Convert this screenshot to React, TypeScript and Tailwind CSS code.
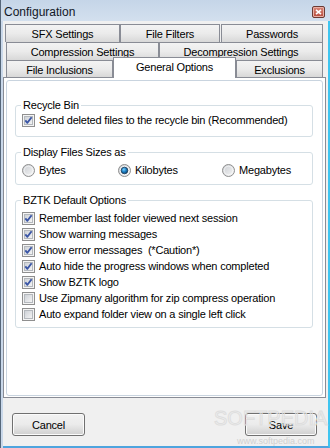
import React from "react";

type TabProps = {
  label: string;
  width: string;
  selected?: boolean;
};

function Tab({ label, width, selected }: TabProps) {
  if (selected) {
    return (
      <div
        className={`relative z-10 -mt-[3px] flex h-[21px] ${width} shrink-0 items-start justify-center border border-b-0 border-[#898c95] bg-white pt-[2px] leading-[14px]`}
      >
        {label}
      </div>
    );
  }
  return (
    <div
      className={`flex h-full ${width} shrink-0 items-center justify-center border border-b-0 border-[#898c95] bg-gradient-to-b from-[#f3f3f3] via-[#ebebeb] via-50% to-[#d8d8d8] pt-[1px] leading-[14px]`}
    >
      {label}
    </div>
  );
}

function CheckBox({ checked }: { checked: boolean }) {
  return (
    <svg width="13" height="13" viewBox="0 0 13 13" className="shrink-0">
      <defs>
        <linearGradient id="cbfill" x1="0" y1="0" x2="1" y2="1">
          <stop offset="0" stopColor="#cbcfd5" />
          <stop offset="1" stopColor="#f6f6f6" />
        </linearGradient>
      </defs>
      <rect x="0.5" y="0.5" width="12" height="12" fill="#f4f4f4" stroke="#8f8f8f" />
      <rect x="2.5" y="2.5" width="8" height="8" fill="url(#cbfill)" stroke="#b4b8bd" />
      {checked && (
        <path
          d="M3.3 6.4 L5.4 8.8 L9.6 3.2"
          fill="none"
          stroke="#3b56a6"
          strokeWidth="1.9"
          strokeLinejoin="round"
        />
      )}
    </svg>
  );
}

function Radio({ checked }: { checked: boolean }) {
  return (
    <svg width="13" height="13" viewBox="0 0 13 13" className="shrink-0">
      <defs>
        <linearGradient id="rdfill" x1="0" y1="0" x2="1" y2="1">
          <stop offset="0" stopColor="#c9ccd1" />
          <stop offset="1" stopColor="#f7f7f7" />
        </linearGradient>
        <radialGradient id="rddot" cx="0.4" cy="0.35" r="0.7">
          <stop offset="0" stopColor="#7fd3ff" />
          <stop offset="0.5" stopColor="#1b7fc4" />
          <stop offset="1" stopColor="#0c3f6b" />
        </radialGradient>
      </defs>
      <circle cx="6.5" cy="6.5" r="6" fill="url(#rdfill)" stroke="#8f8f8f" />
      <circle cx="6.5" cy="6.5" r="4.3" fill="none" stroke="#ffffff" strokeOpacity="0.6" />
      {checked && <circle cx="6.5" cy="6.5" r="3.3" fill="url(#rddot)" stroke="#1c3a57" strokeWidth="0.8" />}
    </svg>
  );
}

function CheckRow({ label, checked }: { label: string; checked: boolean }) {
  return (
    <div className="flex h-[16px] items-center gap-[4px]">
      <CheckBox checked={checked} />
      <span className="whitespace-pre leading-[14px]">{label}</span>
    </div>
  );
}

function Group({
  title,
  className,
  children,
}: {
  title: string;
  className: string;
  children: React.ReactNode;
}) {
  return (
    <div className={`relative rounded-[3px] border border-[#d5dfe5] pl-[6px] ${className}`}>
      <span className="absolute -top-[8px] left-[5px] bg-white px-[2px] leading-[14px]">
        {title}
      </span>
      {children}
    </div>
  );
}

function WinButton({ label }: { label: string }) {
  return (
    <button className="flex h-[23px] w-full items-center justify-center rounded-[3px] border border-[#707070] bg-gradient-to-b from-[#f2f2f2] via-[#ebebeb] via-50% to-[#cfcfcf] shadow-[inset_0_0_0_1px_#fbfbfb] leading-[14px] text-black">
      {label}
    </button>
  );
}

export default function App() {
  const options = [
    { label: "Remember last folder viewed next session", checked: true },
    { label: "Show warning messages", checked: true },
    { label: "Show error messages  (*Caution*)", checked: true },
    { label: "Auto hide the progress windows when completed", checked: true },
    { label: "Show BZTK logo", checked: true },
    { label: "Use Zipmany algorithm for zip compress operation", checked: false },
    { label: "Auto expand folder view on a single left click", checked: false },
  ];

  return (
    <div className="relative flex h-[448px] w-[330px] flex-col overflow-hidden border-l border-[#56677a] bg-[#c9d8ea] font-['Liberation_Sans',Arial,sans-serif] text-[11px] tracking-[-0.2px] text-black">
      {/* title bar */}
      <div className="flex h-[21px] shrink-0 items-center justify-between bg-gradient-to-b from-[#c5d5e8] to-[#d3e0ee] pl-[3px] pr-[5px]">
        <span className="pt-[2px] text-[12px] tracking-normal text-[#111827]">Configuration</span>
        <div className="mt-[2px] flex h-[12px] w-[13px] items-center justify-center rounded-[2px] border border-[#6b3a33] bg-gradient-to-b from-[#d9877a] to-[#b6493a] shadow-[inset_0_0_0_1px_#e9b0a6]">
          <svg width="7" height="6" viewBox="0 0 7 6">
            <path d="M1 0.8 L6 5.2 M6 0.8 L1 5.2" stroke="#ffffff" strokeWidth="1.6" />
          </svg>
        </div>
      </div>

      {/* dialog body */}
      <div className="ml-[2px] flex flex-1 flex-col border-b-2 border-r-2 border-b-[#4ea4de] border-r-[#3fc5f0] bg-[#f0f0f0]">
        {/* tab rows */}
        <div className="flex flex-col pt-[3px]">
          <div className="ml-[2px] flex h-[18px]">
            <Tab label="SFX Settings" width="w-[115px]" />
            <Tab label="File Filters" width="w-[100px]" />
            <div className="w-[1px]" />
            <Tab label="Passwords" width="w-[102px]" />
          </div>
          <div className="ml-[3px] flex h-[18px]">
            <Tab label="Compression Settings" width="w-[153px]" />
            <Tab label="Decompression Settings" width="w-[164px]" />
          </div>
          <div className="ml-[3px] flex h-[17px] items-start">
            <Tab label="File Inclusions" width="w-[107px]" />
            <Tab label="General Options" width="w-[123px]" selected />
            <Tab label="Exclusions" width="w-[87px]" />
          </div>
        </div>

        {/* tab panel */}
        <div className="flex h-[321px] w-[323px] flex-col border border-[#898c95] bg-white pb-[1px] pl-[2px] pr-[2px] pt-[2px]">
          <div className="flex flex-1 flex-col rounded-[3px] border border-[#c9d4df] pl-[8px] pr-[9px] pt-[24px]">
            <Group title="Recycle Bin" className="pb-[8px] pt-[6px]">
              <CheckRow label="Send deleted files to the recycle bin (Recommended)" checked />
            </Group>

            <Group title="Display Files Sizes as" className="mt-[15px] pb-[6px] pt-[9px]">
              <div className="grid h-[16px] grid-cols-[96px_104px_1fr] items-center">
                <div className="flex items-center gap-[4px]">
                  <Radio checked={false} />
                  <span className="leading-[14px]">Bytes</span>
                </div>
                <div className="flex items-center gap-[4px]">
                  <Radio checked />
                  <span className="leading-[14px]">Kilobytes</span>
                </div>
                <div className="flex items-center gap-[4px]">
                  <Radio checked={false} />
                  <span className="leading-[14px]">Megabytes</span>
                </div>
              </div>
            </Group>

            <Group title="BZTK Default Options" className="mt-[15px] pb-[5px] pt-[9px]">
              {options.map((o) => (
                <CheckRow key={o.label} label={o.label} checked={o.checked} />
              ))}
            </Group>
          </div>
        </div>

        {/* buttons */}
        <div className="flex justify-between pl-[9px] pr-[11px] pt-[15px]">
          <div className="w-[73px]">
            <WinButton label="Cancel" />
          </div>
          <div className="w-[72px]">
            <WinButton label="Save" />
          </div>
        </div>
      </div>

      {/* watermark */}
      <div className="pointer-events-none absolute left-[213px] top-[407px] font-['Liberation_Sans',sans-serif] text-[20px] leading-[22px] tracking-normal text-transparent [-webkit-text-stroke:1px_#dedede]">
        SOFTPEDIA
      </div>
      <div className="pointer-events-none absolute left-[236px] top-[436px] text-[9px] leading-[10px] tracking-normal text-[#d0d0d0]">
        www.softpedia.com
      </div>
    </div>
  );
}
